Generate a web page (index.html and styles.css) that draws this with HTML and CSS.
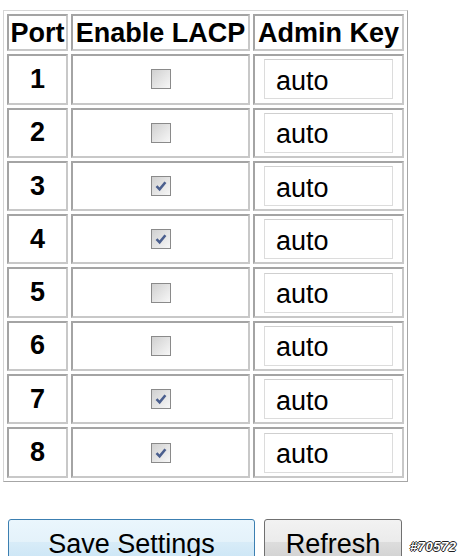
FILE: index.html
```html
<!DOCTYPE html>
<html lang="en">
<head>
    <meta charset="UTF-8">
    <title>LACP Port Configuration</title>
    <link rel="stylesheet" href="styles.css">
</head>
<body>
    <!-- LACP port table -->
    <table class="lacp-table">
        <tr>
            <th class="col-port">Port</th>
            <th class="col-enable">Enable LACP</th>
            <th class="col-key">Admin Key</th>
        </tr>
        <tr>
            <td class="port">1</td>
            <td class="enable"><span class="chk"></span></td>
            <td class="key"><input class="key-input" type="text" value="auto"></td>
        </tr>
        <tr>
            <td class="port">2</td>
            <td class="enable"><span class="chk"></span></td>
            <td class="key"><input class="key-input" type="text" value="auto"></td>
        </tr>
        <tr>
            <td class="port">3</td>
            <td class="enable"><span class="chk"><svg viewBox="0 0 18 18"><path d="M4.5 9.2 L7.6 12.3 L13.4 5.2"/></svg></span></td>
            <td class="key"><input class="key-input" type="text" value="auto"></td>
        </tr>
        <tr>
            <td class="port">4</td>
            <td class="enable"><span class="chk"><svg viewBox="0 0 18 18"><path d="M4.5 9.2 L7.6 12.3 L13.4 5.2"/></svg></span></td>
            <td class="key"><input class="key-input" type="text" value="auto"></td>
        </tr>
        <tr>
            <td class="port">5</td>
            <td class="enable"><span class="chk"></span></td>
            <td class="key"><input class="key-input" type="text" value="auto"></td>
        </tr>
        <tr>
            <td class="port">6</td>
            <td class="enable"><span class="chk"></span></td>
            <td class="key"><input class="key-input" type="text" value="auto"></td>
        </tr>
        <tr>
            <td class="port">7</td>
            <td class="enable"><span class="chk"><svg viewBox="0 0 18 18"><path d="M4.5 9.2 L7.6 12.3 L13.4 5.2"/></svg></span></td>
            <td class="key"><input class="key-input" type="text" value="auto"></td>
        </tr>
        <tr>
            <td class="port">8</td>
            <td class="enable"><span class="chk"><svg viewBox="0 0 18 18"><path d="M4.5 9.2 L7.6 12.3 L13.4 5.2"/></svg></span></td>
            <td class="key"><input class="key-input" type="text" value="auto"></td>
        </tr>
    </table>

    <!-- Buttons -->
    <div class="actions">
        <button class="btn btn-save">Save Settings</button>
        <button class="btn btn-refresh">Refresh</button>
        <span class="stamp">#70572</span>
    </div>
</body>
</html>
```

FILE: styles.css
```css
html, body {
    overflow: hidden;
}
body {
    margin: 0;
    padding: 10px 0 0 3px;
    font-family: "Liberation Sans", Arial, sans-serif;
    background: #fff;
    color: #000;
}
.lacp-table {
    border-collapse: separate;
    border-spacing: 3px;
    border: 1px solid;
    border-color: #d6d6d6 #a6a6a6 #a6a6a6 #d6d6d6;
}
.lacp-table th,
.lacp-table td {
    border: 2px solid;
    border-color: #a4a4a4 #c8c8c8 #c8c8c8 #a4a4a4;
    padding: 0;
    text-align: center;
    vertical-align: middle;
}
.lacp-table th {
    height: 33.3px;
    font-size: 27px;
    font-weight: bold;
    line-height: 30px;
}
.lacp-table td {
    height: 46.3px;
}
.col-port { width: 57px; }
.col-enable { width: 175px; }
.col-key { width: 147px; }
.port {
    font-size: 27px;
    font-weight: bold;
}
.chk {
    display: inline-block;
    width: 18px;
    height: 18px;
    border: 1px solid #8a8a8a;
    background: linear-gradient(135deg, #d0d0d0, #f7f7f7);
    vertical-align: middle;
}
.chk svg {
    display: block;
    width: 18px;
    height: 18px;
}
.chk path {
    fill: none;
    stroke: #4b5f8e;
    stroke-width: 2.6;
}
.key {
    text-align: left;
}
.key-input {
    display: block;
    box-sizing: border-box;
    width: 129px;
    height: 40px;
    margin: 0 0 0 9px;
    padding: 4px 0 0 11px;
    border: 1px solid #dcdcdc;
    border-top-color: #cfcfcf;
    font-family: "Liberation Sans", Arial, sans-serif;
    font-size: 27px;
    color: #000;
    background: #fff;
}
.actions {
    display: flex;
    align-items: flex-start;
    gap: 9px;
    margin: 37px 0 0 5px;
}
.btn {
    box-sizing: border-box;
    height: 46px;
    padding: 5px 0 0;
    border: 1px solid #707070;
    border-radius: 3px;
    font-family: "Liberation Sans", Arial, sans-serif;
    font-size: 27px;
    line-height: 30px;
    color: #000;
    text-align: center;
    vertical-align: top;
    background: linear-gradient(#f2f2f2, #ebebeb 50%, #dddddd 50%, #cfcfcf);
}
.btn-save {
    width: 247px;
    border-color: #3c7fb1;
    background: linear-gradient(#eaf6fd, #e4f2fa 50%, #d8ecf8 50%, #c9e4f5);
}
.btn-refresh {
    width: 138px;
}
.stamp {
    margin: 20px 0 0 -1px;
    font-size: 13px;
    font-weight: bold;
    font-style: italic;
    letter-spacing: 0.5px;
    color: #fff;
    text-shadow: -1px 0 #222, 1px 0 #222, 0 -1px #222, 0 1px #222;
}
```
